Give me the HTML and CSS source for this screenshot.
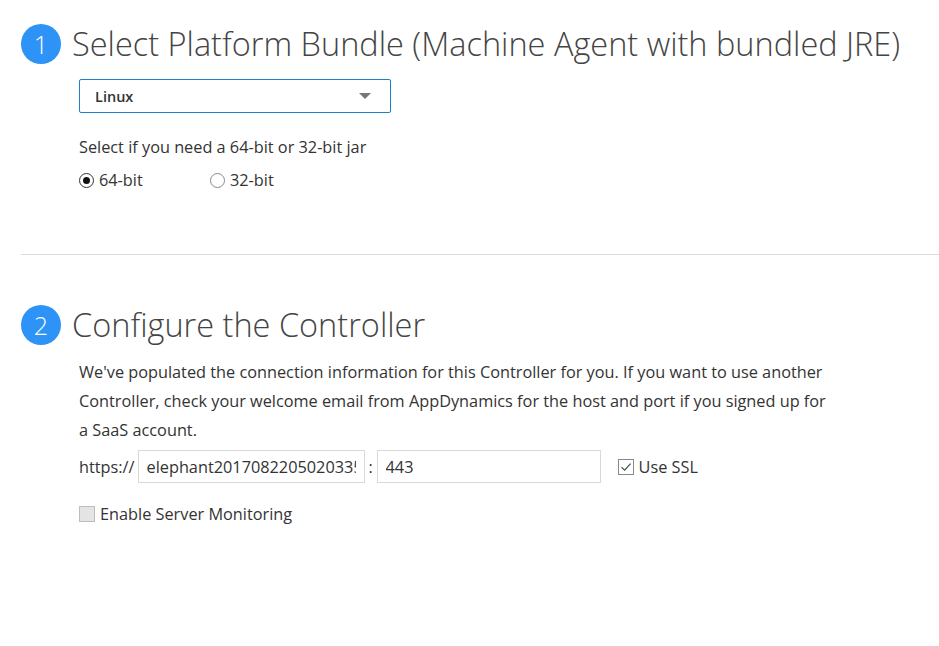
FILE: index.html
```html
<!DOCTYPE html>
<html>
<head>
<meta charset="utf-8">
<link rel="stylesheet" href="styles.css">
</head>
<body>
<div class="page">
  <section class="step step-first">
    <div class="step-head">
      <span class="badge">1</span>
      <h1 class="title">Select Platform Bundle (Machine Agent with bundled JRE)</h1>
    </div>
    <div class="step-body">
      <div class="select">
        <span class="select-value">Linux</span>
        <span class="select-arrow"></span>
      </div>
      <p class="hint">Select if you need a 64-bit or 32-bit jar</p>
      <div class="radios">
        <label class="radio-opt"><span class="radio checked"></span>64-bit</label>
        <label class="radio-opt"><span class="radio"></span>32-bit</label>
      </div>
    </div>
  </section>
  <hr class="divider">
  <section class="step step-second">
    <div class="step-head">
      <span class="badge">2</span>
      <h1 class="title">Configure the Controller</h1>
    </div>
    <div class="step-body">
      <p class="desc">We've populated the connection information for this Controller for you. If you want to use another Controller, check your welcome email from AppDynamics for the host and port if you signed up for a SaaS account.</p>
      <div class="conn-row">
        <span class="proto">https://</span>
        <input class="field field-host" type="text" value="elephant201708220502033591" readonly>
        <span class="colon">:</span>
        <input class="field field-port" type="text" value="443" readonly>
        <label class="check-opt ssl"><span class="check checked"><svg viewBox="0 0 16 16" width="16" height="16"><path d="M3.5 8.2 L6.6 11.2 L12.6 4.6" fill="none" stroke="#444" stroke-width="1.1"/></svg></span>Use SSL</label>
      </div>
      <label class="check-opt monitor"><span class="check disabled"></span>Enable Server Monitoring</label>
    </div>
  </section>
</div>
</body>
</html>
```
FILE: styles.css
```css
html, body {
  margin: 0;
  padding: 0;
  background: #fff;
}
body {
  font-family: "Open Sans", "Liberation Sans", sans-serif;
  color: #333;
  font-size: 16.3px;
}
.page {
  padding-left: 21px;
}
.step-first {
  padding-top: 24px;
  padding-bottom: 63px;
}
.step-second {
  padding-top: 50px;
}
.step-head {
  display: flex;
  align-items: center;
  gap: 11px;
  height: 40px;
}
.badge {
  width: 40px;
  height: 40px;
  border-radius: 50%;
  background: #2e93f7;
  color: #fff;
  font-weight: 300;
  font-size: 25px;
  display: flex;
  align-items: center;
  justify-content: center;
  flex: none;
  line-height: 1;
}
.title {
  margin: 0;
  font-weight: 300;
  font-size: 32.5px;
  line-height: 40px;
  color: #444;
  white-space: nowrap;
}
.step-body {
  padding-left: 58px;
}
.select {
  margin-top: 15px;
  width: 312px;
  height: 34px;
  box-sizing: border-box;
  border: 1px solid #1b82c6;
  border-radius: 2px;
  display: flex;
  align-items: center;
  justify-content: space-between;
  padding: 0 19px 0 15px;
}
.select-value {
  font-weight: 600;
  font-size: 14.5px;
  color: #333;
}
.select-arrow {
  width: 0;
  height: 0;
  border-left: 6px solid transparent;
  border-right: 6px solid transparent;
  border-top: 6px solid #777;
}
.hint {
  margin: 23px 0 0;
  line-height: 22px;
}
.radios {
  display: flex;
  margin-top: 11px;
  line-height: 22px;
}
.radio-opt {
  display: flex;
  align-items: center;
  gap: 5px;
  width: 131px;
}
.radio {
  width: 15px;
  height: 15px;
  box-sizing: border-box;
  border: 1px solid #888;
  border-radius: 50%;
  display: flex;
  align-items: center;
  justify-content: center;
}
.radio.checked {
  border-color: #333;
}
.radio.checked::after {
  content: "";
  width: 7px;
  height: 7px;
  border-radius: 50%;
  background: #111;
}
.divider {
  margin: 0;
  border: 0;
  border-top: 1px solid #dcdcdc;
}
.desc {
  margin: 13px 0 0;
  line-height: 29px;
  width: 760px;
}
.conn-row {
  display: flex;
  align-items: center;
  margin-top: 5px;
  height: 33px;
}
.proto {
  margin-right: 3px;
}
.field {
  height: 33px;
  box-sizing: border-box;
  border: 1px solid #d9d9d9;
  border-radius: 0;
  padding: 0 8px;
  margin: 0;
  font: inherit;
  color: #333;
  background: #fff;
  outline: none;
}
.field-host {
  width: 227px;
}
.colon {
  width: 12px;
  text-align: center;
}
.field-port {
  width: 224px;
}
.check-opt {
  display: flex;
  align-items: center;
  gap: 5px;
  line-height: 22px;
}
.ssl {
  margin-left: 17px;
}
.check {
  width: 16px;
  height: 16px;
  box-sizing: border-box;
  border: 1px solid #888;
  display: flex;
  align-items: center;
  justify-content: center;
}
.check svg {
  flex: none;
}
.check.disabled {
  background: #e4e4e4;
  border-color: #bdbdbd;
}
.monitor {
  margin-top: 20px;
}
```
